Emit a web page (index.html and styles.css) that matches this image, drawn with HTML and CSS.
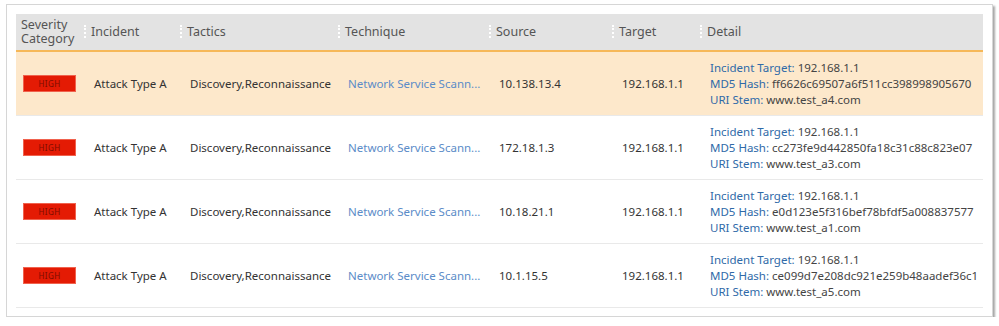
FILE: index.html
```html
<!DOCTYPE html>
<html lang="en">
  <head>
    <meta charset="UTF-8" />
    <title>Incidents</title>
    <link rel="stylesheet" href="styles.css">
  </head>
  <body>
    <div class="panel">
      <table class="grid">
        <colgroup>
          <col class="c-sev" />
          <col class="c-inc" />
          <col class="c-tac" />
          <col class="c-tech" />
          <col class="c-src" />
          <col class="c-tgt" />
          <col class="c-det" />
        </colgroup>
        <thead>
          <tr>
            <th class="first">Severity<br />Category</th>
            <th>Incident</th>
            <th>Tactics</th>
            <th>Technique</th>
            <th>Source</th>
            <th>Target</th>
            <th>Detail</th>
          </tr>
        </thead>
        <tbody>
          <tr class="selected">
            <td class="sev"><span class="badge">HIGH</span></td>
            <td>Attack Type A</td>
            <td>Discovery,Reconnaissance</td>
            <td><a class="link" href="#">Network Service Scann...</a></td>
            <td>10.138.13.4</td>
            <td>192.168.1.1</td>
            <td class="detail">
              <div><span class="label">Incident Target:</span> 192.168.1.1</div>
              <div><span class="label">MD5 Hash:</span> ff6626c69507a6f511cc398998905670</div>
              <div><span class="label">URI Stem:</span> www.test_a4.com</div>
            </td>
          </tr>
          <tr>
            <td class="sev"><span class="badge">HIGH</span></td>
            <td>Attack Type A</td>
            <td>Discovery,Reconnaissance</td>
            <td><a class="link" href="#">Network Service Scann...</a></td>
            <td>172.18.1.3</td>
            <td>192.168.1.1</td>
            <td class="detail">
              <div><span class="label">Incident Target:</span> 192.168.1.1</div>
              <div><span class="label">MD5 Hash:</span> cc273fe9d442850fa18c31c88c823e07</div>
              <div><span class="label">URI Stem:</span> www.test_a3.com</div>
            </td>
          </tr>
          <tr>
            <td class="sev"><span class="badge">HIGH</span></td>
            <td>Attack Type A</td>
            <td>Discovery,Reconnaissance</td>
            <td><a class="link" href="#">Network Service Scann...</a></td>
            <td>10.18.21.1</td>
            <td>192.168.1.1</td>
            <td class="detail">
              <div><span class="label">Incident Target:</span> 192.168.1.1</div>
              <div><span class="label">MD5 Hash:</span> e0d123e5f316bef78bfdf5a008837577</div>
              <div><span class="label">URI Stem:</span> www.test_a1.com</div>
            </td>
          </tr>
          <tr>
            <td class="sev"><span class="badge">HIGH</span></td>
            <td>Attack Type A</td>
            <td>Discovery,Reconnaissance</td>
            <td><a class="link" href="#">Network Service Scann...</a></td>
            <td>10.1.15.5</td>
            <td>192.168.1.1</td>
            <td class="detail">
              <div><span class="label">Incident Target:</span> 192.168.1.1</div>
              <div><span class="label">MD5 Hash:</span> ce099d7e208dc921e259b48aadef36c1</div>
              <div><span class="label">URI Stem:</span> www.test_a5.com</div>
            </td>
          </tr>
        </tbody>
      </table>
    </div>
  </body>
</html>
```

FILE: styles.css
```css
body {
  margin: 0;
  background-color: #ffffff;
  font-family: "Noto Sans", Arial, sans-serif;
  color: #333333;
}
.panel {
  box-sizing: border-box;
  width: 987px;
  height: 313px;
  margin: 4px 0 0 6px;
  padding: 9px 9px 0 9px;
  background-color: #ffffff;
  border: 1px solid #d6d6d6;
  box-shadow: 2px 2px 2px rgba(0, 0, 0, 0.35);
}
.grid {
  table-layout: fixed;
  width: 967px;
  border-collapse: collapse;
  font-size: 11.5px;
}
.c-sev { width: 68px; }
.c-inc { width: 96px; }
.c-tac { width: 158px; }
.c-tech { width: 151px; }
.c-src { width: 123px; }
.c-tgt { width: 88px; }
.c-det { width: 283px; }

.grid th {
  position: relative;
  height: 36px;
  padding: 0 0 0 7px;
  background-color: #e3e3e3;
  border-bottom: 2px solid #f6b859;
  color: #555555;
  font-size: 12.5px;
  font-weight: normal;
  line-height: 14px;
  text-align: left;
  white-space: nowrap;
}
.grid th.first {
  padding-left: 5px;
}
.grid th::before {
  content: "";
  position: absolute;
  left: 0;
  top: 11px;
  width: 2px;
  height: 13px;
  border-left: 2px dotted #ffffff;
  box-sizing: border-box;
}
.grid th.first::before {
  display: none;
}
.grid td {
  height: 63px;
  padding: 0 2px 0 10px;
  border-bottom: 1px solid #e9e9e9;
  white-space: nowrap;
  overflow: hidden;
  vertical-align: middle;
}
.grid td.sev {
  padding-left: 7px;
}
.selected td {
  background-color: #fde8cb;
}
.badge {
  display: block;
  box-sizing: border-box;
  width: 53px;
  height: 17px;
  background-color: #e41b04;
  border: 1px solid #f0624e;
  color: #7c0c00;
  font-size: 8px;
  letter-spacing: 0.4px;
  line-height: 15px;
  text-align: center;
}
.link {
  color: #5b8cc8;
  text-decoration: none;
}
.detail {
  line-height: 16px;
  color: #444444;
}
.label {
  color: #2f6aa8;
}
```
